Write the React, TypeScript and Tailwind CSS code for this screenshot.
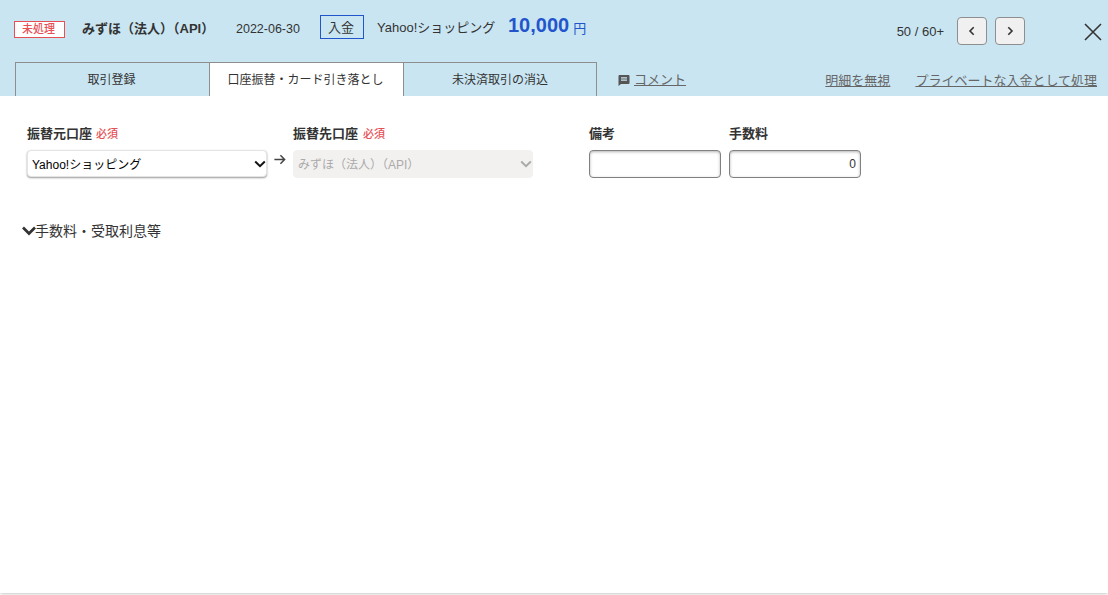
function Chevron({ color, width }: { color: string; width: number }) {
  return (
    <svg width="12" height="8" viewBox="0 0 12 8" fill="none" stroke={color} strokeWidth={width} className="absolute right-[1px] top-[10px] pointer-events-none">
      <path d="M1.2 1.5 6 6.2l4.8-4.7" />
    </svg>
  );
}

export default function App() {
  return (
    <div className="h-[595px] w-[1108px] overflow-hidden bg-white font-['Liberation_Sans','Noto_Sans_CJK_JP',sans-serif] text-[#333]">
      <div className="h-[593px] bg-white shadow-[0_0_4px_rgba(0,0,0,0.35)]">
        <header className="h-[96px] bg-[#c9e5f2] flex flex-col">
          <div className="h-[62px] flex items-start pl-[14px] pr-[6px]">
            <span className="mt-[21px] w-[51px] h-[17px] border border-[#e65055] bg-white text-[#e65055] text-[11px] leading-[15px] text-center font-medium pr-[2px]">未処理</span>
            <span className="mt-[19px] ml-[17px] w-[154px] text-[13px] leading-[20px] font-bold whitespace-nowrap">みずほ（法人）（API）</span>
            <span className="mt-[19px] text-[12.5px] leading-[20px] w-[84px] whitespace-nowrap">2022-06-30</span>
            <span className="mt-[15px] w-[44px] h-[24px] border border-[#2255cc] text-[13px] leading-[24px] text-center pr-[2px]">入金</span>
            <span className="mt-[18px] ml-[13px] w-[131px] text-[13px] leading-[20px] whitespace-nowrap">Yahoo!ショッピング</span>
            <span className="mt-[13px] text-[#2255cc] text-[20px] leading-[25px] font-bold">10,000</span>
            <span className="mt-[19px] ml-[4px] text-[#2255cc] text-[13px] leading-[20px]">円</span>
            <span className="mt-[22px] ml-auto text-[13px] leading-[20px] whitespace-nowrap">50 / 60+</span>
            <button className="mt-[17px] ml-[13px] w-[30px] h-[28px] rounded-[4px] border border-[#8e8e8e] bg-[#f0f0f0] flex items-center justify-center">
              <svg width="10" height="10" viewBox="0 0 10 10" fill="none" stroke="#333" strokeWidth="1.6"><path d="M6.7 1.2 3 5l3.7 3.8" /></svg>
            </button>
            <button className="mt-[17px] ml-[8px] w-[30px] h-[28px] rounded-[4px] border border-[#8e8e8e] bg-[#f0f0f0] flex items-center justify-center">
              <svg width="10" height="10" viewBox="0 0 10 10" fill="none" stroke="#333" strokeWidth="1.6"><path d="M3.3 1.2 7 5 3.3 8.8" /></svg>
            </button>
            <button className="mt-[23px] ml-[59px] w-[18px] h-[18px] flex items-center justify-center">
              <svg width="18" height="18" viewBox="0 0 18 18" fill="none" stroke="#333" strokeWidth="1.6"><path d="M1 1l16 16M17 1 1 17" /></svg>
            </button>
          </div>
          <div className="h-[34px] flex items-stretch pl-[15px] pr-[11px]">
            <div className="w-[194px] border-t border-l border-[#8e8e8e] text-[12px] leading-[34px] text-center pr-[2px]">取引登録</div>
            <div className="w-[194px] border-t border-l border-[#8e8e8e] bg-white text-[12px] leading-[34px] text-center whitespace-nowrap pr-[2px]">口座振替・カード引き落とし</div>
            <div className="w-[194px] border-t border-l border-r border-[#8e8e8e] text-[12px] leading-[34px] text-center">未決済取引の消込</div>
            <a className="ml-[21px] pt-[2px] flex items-center text-[13px] text-[#666]">
              <svg width="12" height="12" viewBox="0 0 12 12" fill="#555" className="mr-[4px]"><path d="M1.5 1h9a1 1 0 0 1 1 1v7a1 1 0 0 1-1 1H3l-2.5 2V2a1 1 0 0 1 1-1zM3 3.2v1.2h6V3.2H3zm0 2.4v1.2h6V5.6H3z" /></svg>
              <span className="underline">コメント</span>
            </a>
            <a className="ml-auto mt-[9px] text-[13px] leading-[20px] text-[#666] underline">明細を無視</a>
            <a className="ml-[25px] mt-[9px] text-[13px] leading-[20px] text-[#666] underline whitespace-nowrap">プライベートな入金として処理</a>
          </div>
        </header>
        <main className="pl-[27px] pt-[28px]">
          <div className="flex items-start">
            <div className="w-[240px]">
              <div className="h-[20px] flex items-center gap-[4px]">
                <span className="text-[13px] font-bold">振替元口座</span>
                <span className="text-[11px] font-medium text-[#e65055]">必須</span>
              </div>
              <div className="relative mt-[6px] h-[27px]">
                <select className="block w-[240px] h-[27px] rounded-[4px] border border-[#e4e4e4] bg-white text-[12px] leading-[27px] pt-[1px] text-black shadow-[0_1px_2px_rgba(0,0,0,0.4)] appearance-none pl-[4px]" defaultValue="a">
                  <option value="a">Yahoo!ショッピング</option>
                </select>
                <Chevron color="#111" width={2} />
              </div>
            </div>
            <div className="w-[26px] mt-[29px] pr-[1px] flex justify-center">
              <svg width="13" height="13" viewBox="0 0 14 14" fill="none" stroke="#444" strokeWidth="1.6"><path d="M1.5 7h11M8 2.5 12.5 7 8 11.5" /></svg>
            </div>
            <div className="w-[240px]">
              <div className="h-[20px] flex items-center gap-[5px]">
                <span className="text-[13px] font-bold">振替先口座</span>
                <span className="text-[11px] font-medium text-[#e65055]">必須</span>
              </div>
              <div className="relative mt-[6px] h-[28px]">
                <select disabled className="block w-[240px] h-[28px] rounded-[4px] border border-[#f2f1f0] bg-[#f2f1f0] text-[12px] text-[#aaa] opacity-100 appearance-none pl-[4px] pt-[1px]" defaultValue="a">
                  <option value="a">みずほ（法人）（API）</option>
                </select>
                <Chevron color="#aaa" width={2} />
              </div>
            </div>
            <div className="w-[132px] ml-[56px]">
              <div className="h-[20px] flex items-center text-[13px] font-bold">備考</div>
              <input className="mt-[6px] block w-[132px] h-[28px] rounded-[4px] border border-[#808080] bg-white shadow-[inset_0_1px_3px_rgba(0,0,0,0.3)] px-[4px] text-[12px]" />
            </div>
            <div className="w-[132px] ml-[8px]">
              <div className="h-[20px] flex items-center text-[13px] font-bold">手数料</div>
              <input defaultValue="0" className="mt-[6px] block w-[132px] h-[28px] rounded-[4px] border border-[#808080] bg-white shadow-[inset_0_1px_3px_rgba(0,0,0,0.3)] px-[4px] text-[12px] text-right" />
            </div>
          </div>
          <div className="mt-[43px] -ml-[5px] flex items-center h-[20px] text-[14px]">
            <svg width="14" height="10" viewBox="0 0 14 10" fill="none" stroke="#333" strokeWidth="2.7" className="-mr-[1px]"><path d="M1 1.5 7 7.5 13 1.5" /></svg>
            <span>手数料・受取利息等</span>
          </div>
        </main>
      </div>
    </div>
  );
}
